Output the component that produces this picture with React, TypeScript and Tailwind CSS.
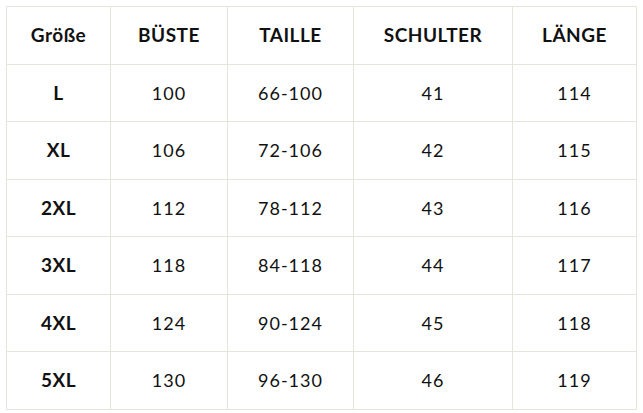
const headers = ['Größe', 'BÜSTE', 'TAILLE', 'SCHULTER', 'LÄNGE'];

const rows = [
  ['L', '100', '66-100', '41', '114'],
  ['XL', '106', '72-106', '42', '115'],
  ['2XL', '112', '78-112', '43', '116'],
  ['3XL', '118', '84-118', '44', '117'],
  ['4XL', '124', '90-124', '45', '118'],
  ['5XL', '130', '96-130', '46', '119'],
];

const widths = ['w-[104px]', 'w-[117px]', 'w-[126px]', 'w-[159px]', 'w-[124px]'];

const App = () => {
  return (
    <div className="min-h-screen bg-white pl-[6px] pt-[6px] text-[#111]" style={{ fontFamily: 'Lato, "Liberation Sans", sans-serif' }}>
      <table className="w-[631px] table-fixed border-collapse">
        <colgroup>
          {widths.map((w, i) => (
            <col key={i} className={w} />
          ))}
        </colgroup>
        <thead>
          <tr className="h-[58px]">
            {headers.map((h) => (
              <th key={h} className="border border-[#e6e4dd] p-0 text-center text-[19px] font-bold tracking-[0.5px]">
                {h}
              </th>
            ))}
          </tr>
        </thead>
        <tbody>
          {rows.map((row, r) => (
            <tr key={r} className={r % 2 === 0 ? 'h-[57px]' : 'h-[58px]'}>
              {row.map((cell, c) => (
                <td
                  key={c}
                  className={
                    c === 0
                      ? 'border border-[#e6e4dd] p-0 text-center text-[19px] font-bold tracking-[0.5px]'
                      : 'border border-[#e6e4dd] p-0 text-center text-[18px] tracking-[1px]'
                  }
                >
                  {cell}
                </td>
              ))}
            </tr>
          ))}
        </tbody>
      </table>
    </div>
  );
};

export default App;
